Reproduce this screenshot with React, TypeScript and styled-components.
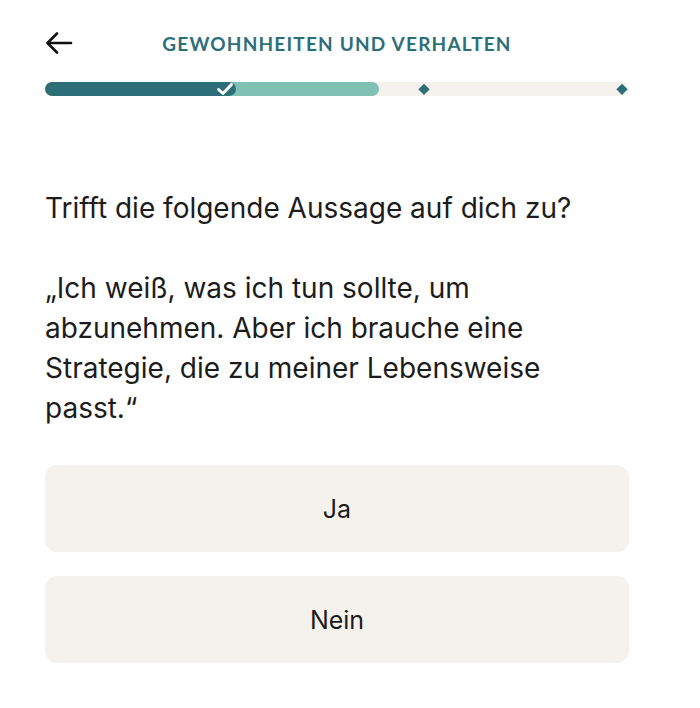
import React from "react";
import styled, { createGlobalStyle } from "styled-components";

const Global = createGlobalStyle`
  html, body { margin: 0; padding: 0; background: #ffffff; }
  body { font-family: Inter, "Noto Sans", sans-serif; color: #1c1c1c; }
`;

const Page = styled.div`
  width: 700px;
  box-sizing: border-box;
  padding: 0 71px 0 45px;
`;

const Header = styled.header`
  height: 78px;
  padding-top: 4px;
  display: grid;
  grid-template-columns: 40px 1fr 40px;
  align-items: center;
`;

const BackButton = styled.button`
  border: none;
  background: none;
  padding: 0;
  width: 30px;
  height: 30px;
  display: flex;
  align-items: center;
  cursor: pointer;
`;

const Title = styled.h1`
  margin: 0;
  text-align: center;
  font-family: Lato, "Noto Sans", sans-serif;
  font-weight: 700;
  font-size: 19px;
  letter-spacing: 1.2px;
  color: #2d6f78;
  text-transform: uppercase;
`;

const Track = styled.div`
  position: relative;
  height: 14px;
  border-radius: 7px;
  background: #f5f2ee;
  display: flex;
`;

const Segment = styled.div<{ $color: string; $z: number }>`
  height: 100%;
  border-radius: 7px;
  background: ${(p) => p.$color};
  z-index: ${(p) => p.$z};
  position: relative;
`;

const Marker = styled.div<{ $left: number }>`
  position: absolute;
  top: 50%;
  left: ${(p) => p.$left}px;
  transform: translate(-50%, -50%);
  display: flex;
  z-index: 3;
`;

const Diamond = styled.div`
  width: 7.5px;
  height: 7.5px;
  background: #2d6f78;
  transform: rotate(45deg);
`;

const Question = styled.div`
  margin-top: 92px;
  font-size: 28px;
  line-height: 40px;
  color: #1c1c1c;
`;

const Para = styled.p`
  margin: 0 0 40px 0;
  &:last-child { margin-bottom: 0; }
`;

const Options = styled.div`
  display: flex;
  flex-direction: column;
  gap: 24px;
  margin-top: 37px;
`;

const Option = styled.button`
  height: 87px;
  border: none;
  border-radius: 12px;
  background: #f5f2ee;
  font-family: Inter, "Noto Sans", sans-serif;
  font-size: 25px;
  color: #1c1c1c;
  cursor: pointer;
`;

export default function App() {
  return (
    <Page>
      <Global />
      <Header>
        <BackButton aria-label="Zurück">
          <svg width="28" height="24" viewBox="0 0 28 24" fill="none" stroke="#111" strokeWidth="2.6" strokeLinecap="round" strokeLinejoin="round">
            <path d="M26 12H3" />
            <path d="M12 2.5L2.5 12L12 21.5" />
          </svg>
        </BackButton>
        <Title>Gewohnheiten und Verhalten</Title>
        <div />
      </Header>
      <Track style={{ width: 584 }}>
        <Segment $color="#2d6f78" $z={2} style={{ width: 191 }} />
        <Segment $color="#80c1b4" $z={1} style={{ width: 153, marginLeft: -10 }} />
        <Marker $left={180}>
          <svg width="18" height="14" viewBox="0 0 18 14" fill="none" stroke="#fff" strokeWidth="3" strokeLinecap="round" strokeLinejoin="round">
            <path d="M2.5 7.5L7 11.5L15.5 2.5" />
          </svg>
        </Marker>
        <Marker $left={379}>
          <Diamond />
        </Marker>
        <Marker $left={577}>
          <Diamond />
        </Marker>
      </Track>
      <Question>
        <Para>Trifft die folgende Aussage auf dich zu?</Para>
        <Para>„Ich weiß, was ich tun sollte, um abzunehmen. Aber ich brauche eine Strategie, die zu meiner Lebensweise passt.“</Para>
      </Question>
      <Options>
        <Option>Ja</Option>
        <Option>Nein</Option>
      </Options>
    </Page>
  );
}
